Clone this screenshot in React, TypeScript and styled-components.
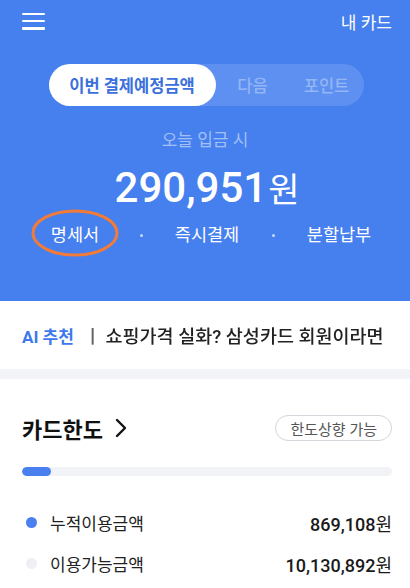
import React from 'react';
import styled, { createGlobalStyle } from 'styled-components';

const GlobalStyle = createGlobalStyle`
  body {
    margin: 0;
    background: #f3f4f8;
    font-family: Roboto, "Noto Sans CJK KR", sans-serif;
    -webkit-font-smoothing: antialiased;
  }
`;

const BLUE = '#4680ee';

const Page = styled.div`
  width: 410px;
  min-height: 588px;
  background: #f3f4f8;
`;

const Header = styled.header`
  background: ${BLUE};
  padding-bottom: 53px;
`;

const TopBar = styled.div`
  height: 42px;
  display: flex;
  align-items: center;
  justify-content: space-between;
  padding: 0 18px 0 22px;
`;

const Burger = styled.button`
  width: 23px;
  height: 17px;
  padding: 0;
  border: 0;
  background: none;
  display: flex;
  flex-direction: column;
  justify-content: space-between;

  > span {
    display: block;
    height: 2.5px;
    border-radius: 1px;
    background: #fff;
  }
`;

const MyCard = styled.span`
  color: #fff;
  font-size: 17px;
  font-weight: 400;
`;

const SegmentWrap = styled.div`
  display: flex;
  justify-content: center;
  margin-top: 22px;
  padding-left: 2px;
`;

const Segment = styled.div`
  display: flex;
  height: 42px;
  border-radius: 21px;
  background: rgba(255, 255, 255, 0.13);
`;

const Tab = styled.div<{ $active?: boolean }>`
  display: flex;
  align-items: center;
  justify-content: center;
  border-radius: 21px;
  font-size: 16.5px;
  font-weight: ${(p) => (p.$active ? 700 : 500)};
  width: ${(p) => (p.$active ? '167px' : '74px')};
  background: ${(p) => (p.$active ? '#fff' : 'transparent')};
  color: ${(p) => (p.$active ? '#3b6fdc' : 'rgba(255, 255, 255, 0.35)')};
`;

const Caption = styled.div`
  margin-top: 22px;
  text-align: center;
  font-size: 17px;
  line-height: 24px;
  color: rgba(255, 255, 255, 0.5);
`;

const Amount = styled.div`
  margin-top: 11px;
  text-align: center;
  color: #fff;
  font-size: 42px;
  line-height: 50px;
  font-weight: 500;
  padding-left: 4px;

  > small {
    font-size: 34px;
    font-weight: 400;
    margin-left: 1px;
  }
`;

const Links = styled.div`
  margin-top: 7px;
  margin-left: 11px;
  display: grid;
  grid-template-columns: 128px 4px 128px 4px 128px;
  align-items: center;
  height: 26px;
`;

const LinkItem = styled.div`
  position: relative;
  text-align: center;
  color: #fff;
  font-size: 17.5px;
  line-height: 26px;
`;

const Dot = styled.span`
  width: 3px;
  height: 3px;
  border-radius: 50%;
  background: rgba(255, 255, 255, 0.7);
  justify-self: center;
`;

const Circle = styled.svg`
  position: absolute;
  left: 50%;
  top: 50%;
  width: 90px;
  height: 50px;
  margin: -27px 0 0 -45px;
  pointer-events: none;
`;

const AiStrip = styled.div`
  height: 68px;
  background: #fff;
  display: flex;
  align-items: center;
  padding: 0 18px 0 22px;
`;

const AiLabel = styled.span`
  color: #3d78ec;
  font-weight: 700;
  font-size: 17px;
  white-space: nowrap;
`;

const Ticker = styled.div`
  flex: 1;
  margin-left: 10px;
  overflow: hidden;
  white-space: nowrap;
  font-size: 18.5px;
  font-weight: 500;
  color: #222;
  -webkit-mask-image: linear-gradient(to right, transparent 0, #000 12px, #000 calc(100% - 6px), transparent 100%);
  mask-image: linear-gradient(to right, transparent 0, #000 12px, #000 calc(100% - 6px), transparent 100%);
`;

const Card = styled.section`
  margin-top: 10px;
  background: #fff;
  padding: 34px 18px 20px 22px;
`;

const TitleRow = styled.div`
  height: 30px;
  display: flex;
  align-items: center;
  justify-content: space-between;
`;

const Title = styled.h2`
  margin: 0;
  display: flex;
  align-items: center;
  gap: 12px;
  font-size: 22px;
  font-weight: 700;
  color: #111;
`;

const Badge = styled.span`
  height: 26px;
  box-sizing: border-box;
  padding: 0 14px;
  border: 1px solid #d4d6db;
  border-radius: 14px;
  display: flex;
  align-items: center;
  font-size: 15px;
  color: #555;
`;

const Track = styled.div`
  margin-top: 24px;
  height: 9px;
  border-radius: 5px;
  background: #f2f3f7;
  overflow: hidden;
`;

const Fill = styled.div`
  height: 100%;
  border-radius: 5px;
  background: #4a7ff0;
`;

const List = styled.div`
  margin-top: 26px;
`;

const Row = styled.div`
  height: 41px;
  display: flex;
  align-items: center;
`;

const Bullet = styled.span<{ $color: string }>`
  width: 11px;
  height: 11px;
  border-radius: 50%;
  margin: 0 13px 0 4px;
  background: ${(p) => p.$color};
`;

const Label = styled.span`
  flex: 1;
  font-size: 17px;
  color: #222;
`;

const Value = styled.span`
  font-size: 18px;
  font-weight: 500;
  color: #1a1a1a;

  > small {
    font-size: 18px;
    font-weight: 400;
  }
`;

const Chevron = () => (
  <svg width="12" height="20" viewBox="0 0 12 20">
    <path d="M2 2 L10 10 L2 18" fill="none" stroke="#111" strokeWidth="2.4" strokeLinecap="round" strokeLinejoin="round" />
  </svg>
);

const tabs = ['이번 결제예정금액', '다음', '포인트'];

const usage = [
  { label: '누적이용금액', value: '869,108', color: '#4a7ff0' },
  { label: '이용가능금액', value: '10,130,892', color: '#eef0f4' },
];

const App = () => {
  const used = 869108;
  const total = 869108 + 10130892;

  return (
    <>
      <GlobalStyle />
      <Page>
        <Header>
          <TopBar>
            <Burger aria-label="메뉴">
              <span />
              <span />
              <span />
            </Burger>
            <MyCard>내 카드</MyCard>
          </TopBar>
          <SegmentWrap>
            <Segment>
              {tabs.map((t, i) => (
                <Tab key={t} $active={i === 0}>
                  {t}
                </Tab>
              ))}
            </Segment>
          </SegmentWrap>
          <Caption>오늘 입금 시</Caption>
          <Amount>
            290,951<small>원</small>
          </Amount>
          <Links>
            <LinkItem>
              명세서
              <Circle viewBox="0 0 90 50">
                <ellipse cx="45" cy="25" rx="42" ry="22" fill="none" stroke="#f47b35" strokeWidth="3" />
              </Circle>
            </LinkItem>
            <Dot />
            <LinkItem>즉시결제</LinkItem>
            <Dot />
            <LinkItem>분할납부</LinkItem>
          </Links>
        </Header>

        <AiStrip>
          <AiLabel>AI 추천</AiLabel>
          <Ticker>ㅣ 쇼핑가격 실화? 삼성카드 회원이라면</Ticker>
        </AiStrip>

        <Card>
          <TitleRow>
            <Title>
              카드한도 <Chevron />
            </Title>
            <Badge>한도상향 가능</Badge>
          </TitleRow>
          <Track>
            <Fill style={{ width: `${Math.max((used / total) * 100, 7.8)}%` }} />
          </Track>
          <List>
            {usage.map((u) => (
              <Row key={u.label}>
                <Bullet $color={u.color} />
                <Label>{u.label}</Label>
                <Value>
                  {u.value}
                  <small>원</small>
                </Value>
              </Row>
            ))}
          </List>
        </Card>
      </Page>
    </>
  );
};

export default App;
